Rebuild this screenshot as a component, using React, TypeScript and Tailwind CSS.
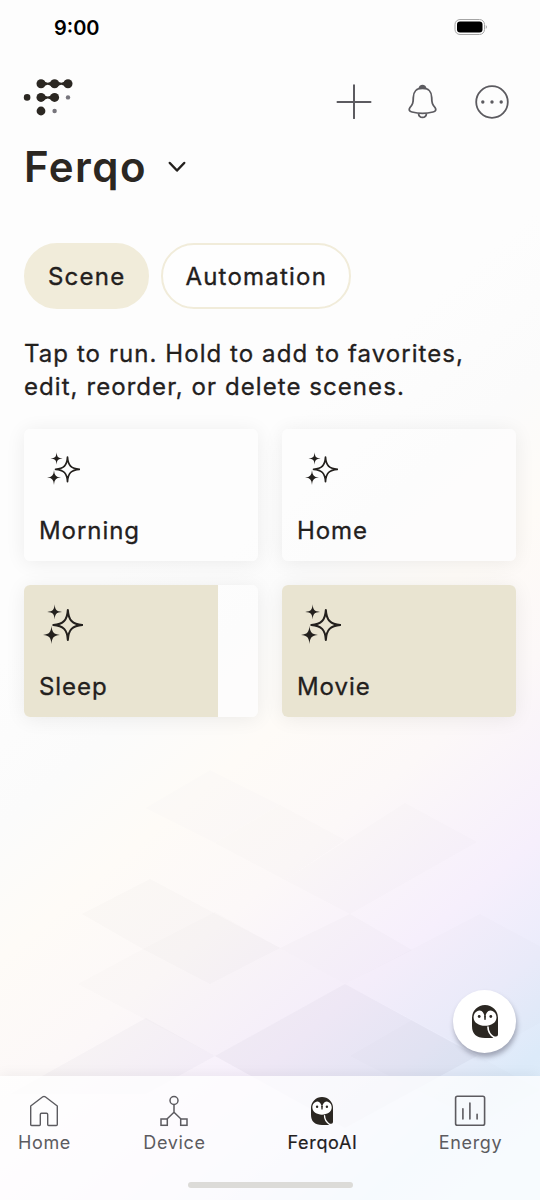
import { useState } from "react";

type IconProps = { className?: string };

function Logo() {
  return (
    <svg viewBox="0 0 50 38" className="w-[50px] h-[38px]" fill="#2b2722">
      {/* Linked dots */}
      <circle cx="18" cy="5.7" r="4.5" />
      <circle cx="31.6" cy="5.7" r="4.5" />
      <circle cx="45" cy="5.7" r="4.5" />
      <circle cx="18" cy="19.4" r="4.5" />
      <circle cx="31.6" cy="19.4" r="4.5" />
      <path d="M20 2 Q24.8 7.4 29.6 2 V9.4 Q24.8 4 20 9.4 Z" />
      <path d="M33.6 2 Q38.3 7.4 43 2 V9.4 Q38.3 4 33.6 9.4 Z" />
      <path d="M20 15.7 Q24.8 21.1 29.6 15.7 V23.1 Q24.8 17.7 20 23.1 Z" />
      {/* Loose dots */}
      <circle cx="4.1" cy="19.4" r="3.3" />
      <circle cx="18" cy="33" r="4.4" />
      <circle cx="45" cy="19.4" r="2.2" fill="#77757c" />
      <circle cx="31.6" cy="33" r="2.2" fill="#77757c" />
    </svg>
  );
}

function Owl({ className }: IconProps) {
  return (
    <svg viewBox="0 0 26 33" className={className}>
      <path
        d="M0 13 A13 13 0 0 1 26 13 V29.5 Q26 31.5 24 31.5 H22.6 L20.6 33 H13 Q0 33 0 21 Z"
        fill="#2b2722"
      />
      {/* Face */}
      <path
        d="M7.6 5.4 C10.6 5.6 12 8 13 12.6 C14 8 15.4 5.6 18.4 5.4 C22.2 5.8 24.5 8.8 24.5 12.4 C24.5 17.5 19 20.8 13 20.8 C7 20.8 1.6 17.5 1.6 12.4 C1.6 8.8 3.8 5.8 7.6 5.4 Z"
        fill="#fff"
      />
      <path d="M12 10.5 H14 L13.7 14.4 Q13 15.4 12.3 14.4 Z" fill="#2b2722" />
      <circle cx="7.2" cy="11.5" r="1.4" fill="#2b2722" />
      <circle cx="18.8" cy="11.5" r="1.4" fill="#2b2722" />
      {/* Wing */}
      <path d="M16 22 Q15.9 28.5 22.3 32.5" fill="none" stroke="#fff" strokeWidth="1.6" strokeLinecap="round" />
    </svg>
  );
}

function Sparkles({ className }: IconProps) {
  return (
    <svg viewBox="0 0 33 33" className={className} fill="#23201d">
      <path
        d="M20.5 5 C21 13.4 24.2 16.7 32.5 17.3 C24.2 17.9 21 21.2 20.5 29.6 C20 21.2 16.8 17.9 8.5 17.3 C16.8 16.7 20 13.4 20.5 5 Z"
        fill="none"
        stroke="#23201d"
        strokeWidth="1.7"
        strokeLinejoin="round"
      />
      <path d="M9.6 .3 C10 4.9 11 6.1 15.7 6.5 C11 6.9 10 8.1 9.6 12.7 C9.2 8.1 8.2 6.9 3.5 6.5 C8.2 6.1 9.2 4.9 9.6 .3 Z" />
      <path d="M7 18 C7.5 23.4 8.7 25 14 25.5 C8.7 26 7.5 27.6 7 33 C6.5 27.6 5.3 26 0 25.5 C5.3 25 6.5 23.4 7 18 Z" />
    </svg>
  );
}

function HomeIcon() {
  return (
    <svg viewBox="0 0 30 32" className="w-[30px] h-8" fill="none" stroke="#5c5b60" strokeWidth="1.4" strokeLinejoin="round">
      <path d="M1.7 11 L13.8 1.8 Q15 1 16.2 1.8 L28.3 11 V29.5 Q28.3 30.5 27.3 30.5 H19.6 Q18.7 30.5 18.7 29.5 V19.5 Q18.7 18.2 17.5 18.2 H12.5 Q11.3 18.2 11.3 19.5 V29.5 Q11.3 30.5 10.4 30.5 H2.7 Q1.7 30.5 1.7 29.5 Z" />
    </svg>
  );
}

function DeviceIcon() {
  return (
    <svg viewBox="0 0 30 32" className="w-[30px] h-8" fill="none" stroke="#5c5b60" strokeWidth="1.5">
      <circle cx="15" cy="5.5" r="4" />
      <path d="M15 9.5 V17.5 M8 24 L15 17.2 L22 24" />
      <rect x="2" y="24" width="6.3" height="6.3" />
      <rect x="21.7" y="24" width="6.3" height="6.3" />
    </svg>
  );
}

function EnergyIcon() {
  return (
    <svg viewBox="0 0 32 32" className="w-8 h-8" fill="none" stroke="#5c5b60" strokeWidth="1.6" strokeLinecap="round">
      <rect x="1.6" y="1.3" width="29" height="29" rx="1.8" />
      <path d="M8.9 13.8 V24 M15.9 8 V24 M23.1 19.2 V24" />
    </svg>
  );
}

const diamonds = [
  { points: "345,984 477,1056 345,1128 215,1056", opacity: 0.04 },
  { points: "412,1020 540,1090 480,1122 350,1056", opacity: 0.012 },
  { points: "146,1018 215,1056 146,1094 10,1094", opacity: 0.025 },
  { points: "150,879 280,948 210,984 143,949 82,914", opacity: 0.014 },
  { points: "143,949 215,912 345,984 215,1056 78,984", opacity: 0.012 },
  { points: "280,805 345,840 285,880 215,843", opacity: 0.012 },
  { points: "405,803 477,842 350,914 285,880", opacity: 0.012 },
  { points: "210,770 280,805 215,843 145,808", opacity: 0.006 },
  { points: "350,914 412,950 345,984 280,948", opacity: 0.014 },
  { points: "480,914 610,984 480,1056 345,984", opacity: 0.01 },
];

const scenes = [
  { name: "Morning", progress: 0 },
  { name: "Home", progress: 0 },
  { name: "Sleep", progress: 82.7 },
  { name: "Movie", progress: 100 },
];

const tabs = [
  { name: "Home", icon: <HomeIcon /> },
  { name: "Device", icon: <DeviceIcon /> },
  { name: "FerqoAI", icon: <Owl className="w-[22px] h-[28px] my-[2px]" /> },
  { name: "Energy", icon: <EnergyIcon /> },
];

export default function App() {
  const [mode, setMode] = useState("Scene");

  return (
    <div
      className="relative flex flex-col w-[540px] h-[1200px] overflow-hidden text-[#23201d] font-['Inter',sans-serif] bg-[linear-gradient(140deg,#fdfdfd_0%,#fdfdfd_40%,#fbfbfb_50%,#fefbf7_58%,#fcf8f8_67%,#f6effc_78%,#ebecfb_85%,#dceaf9_91%,#dff0fb_100%)]"
    >
      {/* Faint diamond pattern */}
      <svg viewBox="0 0 540 1200" className="absolute inset-0 w-full h-full pointer-events-none">
        {diamonds.map((d) => (
          <polygon key={d.points} points={d.points} fill="#352b40" opacity={d.opacity} />
        ))}
      </svg>

      {/* Status bar */}
      <div className="relative h-[54px] shrink-0 flex items-center justify-between pl-[54px] pr-[52px] text-black">
        <span className="text-[20px] leading-none font-semibold pt-px">9:00</span>
        <svg viewBox="0 0 34 18" className="w-[34px] h-[18px]">
          <rect x="1" y="1.5" width="29.5" height="15" rx="5" fill="none" stroke="#a5a5a5" />
          <rect x="3" y="3.5" width="25.5" height="11" rx="3" fill="#000" />
          <path d="M31.8 7 Q33.8 9 31.8 11 Z" fill="#999" />
        </svg>
      </div>

      {/* Header */}
      <header className="relative px-6 shrink-0">
        <div className="flex justify-between pt-6 -ml-px h-[76px]">
          <Logo />
          <div className="flex gap-[33px] pt-[5px] pr-[6px]">
            <svg viewBox="0 0 36 36" className="w-9 h-9" stroke="#5c5b60" strokeWidth="2" strokeLinecap="round">
              <path d="M18 2.2 V35.2 M1.5 19 H34.5" />
            </svg>
            <svg viewBox="0 0 36 36" className="w-9 h-9" fill="none" stroke="#5c5b60" strokeWidth="1.8" strokeLinejoin="round">
              <path d="M17.5 5.2 C11.5 5.2 8.3 9 8.3 14.5 C8.3 20 7.5 21.5 5 24.5 C3.4 26.7 4.3 28.3 7 29 C13.5 30.6 21.5 30.6 28 29 C30.7 28.3 31.6 26.7 30 24.5 C27.5 21.5 26.7 20 26.7 14.5 C26.7 9 23.5 5.2 17.5 5.2 Z" />
              <path d="M13.3 6.2 C13.8 .4 21.2 .4 21.7 6.2 Z" fill="#5c5b60" stroke="none" />
              <path d="M13.5 30.5 C14 35.7 21 35.7 21.5 30.5" />
            </svg>
            <svg viewBox="0 0 36 36" className="w-9 h-9" fill="#5c5b60">
              <circle cx="18" cy="19" r="15.8" fill="none" stroke="#5c5b60" strokeWidth="1.8" />
              <circle cx="8.8" cy="19" r="1.7" />
              <circle cx="18" cy="19" r="1.7" />
              <circle cx="27.2" cy="19" r="1.7" />
            </svg>
          </div>
        </div>
        <div className="flex items-center h-[74px]">
          <h1 className="text-[42px] leading-none font-semibold tracking-[0.035em] text-[#2b2722]">Ferqo</h1>
          <svg viewBox="0 0 18 12" className="w-[18px] h-3 ml-[21px]" fill="none" stroke="#23201d" strokeWidth="2.5" strokeLinecap="round" strokeLinejoin="round">
            <path d="M1.8 2 L9 9.5 L16.2 2" />
          </svg>
        </div>
      </header>

      {/* Mode pills */}
      <div className="relative flex gap-3 px-6 mt-[39px] shrink-0">
        {["Scene", "Automation"].map((m) => (
          <button
            key={m}
            onClick={() => setMode(m)}
            className={`h-[66px] rounded-full px-[22px] pt-px text-[24px] tracking-[0.051em] [-webkit-text-stroke:0.35px_#23201d] border-2 border-[#f1ecda] ${
              mode === m ? "bg-[#f1ecda]" : "bg-white/60"
            }`}
          >
            {m}
          </button>
        ))}
      </div>

      <p className="relative px-6 mt-7 shrink-0 text-[24px] leading-[33px] tracking-[0.0445em] [-webkit-text-stroke:0.3px_#23201d] whitespace-nowrap">
        Tap to run. Hold to add to favorites,
        <br />
        edit, reorder, or delete scenes.
      </p>

      {/* Scene cards */}
      <div className="relative grid grid-cols-2 gap-6 px-6 mt-[26px] shrink-0">
        {scenes.map((s) => (
          <div key={s.name} className="relative h-[132px] rounded-md overflow-hidden bg-[#fdfdfd]/80 shadow-[0_2px_20px_rgba(0,0,0,0.07)]">
            <div className="absolute inset-y-0 left-0 bg-[#e9e4d1]" style={{ width: `${s.progress}%` }} />
            <div className="relative flex flex-col h-full pl-[15px]">
              <div className="flex items-center justify-center w-[48px] h-[78px]">
                <Sparkles className={s.progress > 0 ? "w-10 h-10" : "w-[33px] h-[33px]"} />
              </div>
              <span className="text-[24px] leading-[47px] tracking-[0.039em] [-webkit-text-stroke:0.3px_#23201d]">{s.name}</span>
            </div>
          </div>
        ))}
      </div>

      {/* Assistant button */}
      <button className="absolute left-[453px] top-[990px] w-[63px] h-[63px] rounded-full bg-white flex items-center justify-center shadow-[1px_4px_5px_rgba(60,60,80,0.4)]">
        <Owl className="w-[26px] h-[33px]" />
      </button>

      {/* Tab bar */}
      <nav className="relative mt-auto h-[124px] shrink-0 bg-white/75 shadow-[0_-2px_12px_rgba(0,0,0,0.05)] flex flex-col justify-between">
        <div className="grid grid-cols-[88px_172px_124px_172px] pt-[19px]">
          {tabs.map((t) => (
            <div key={t.name} className="flex flex-col items-center">
              {t.icon}
              <span
                className={`pl-px text-[18px] leading-[32px] tracking-[0.036em] ${
                  t.name === "FerqoAI" ? "text-[#23201d] [-webkit-text-stroke:0.2px_#23201d]" : "text-[#5c5b60]"
                }`}
              >
                {t.name}
              </span>
            </div>
          ))}
        </div>
        <div className="self-center w-[165px] h-[6px] rounded-full bg-[#dcdbd8] mb-3" />
      </nav>
    </div>
  );
}
